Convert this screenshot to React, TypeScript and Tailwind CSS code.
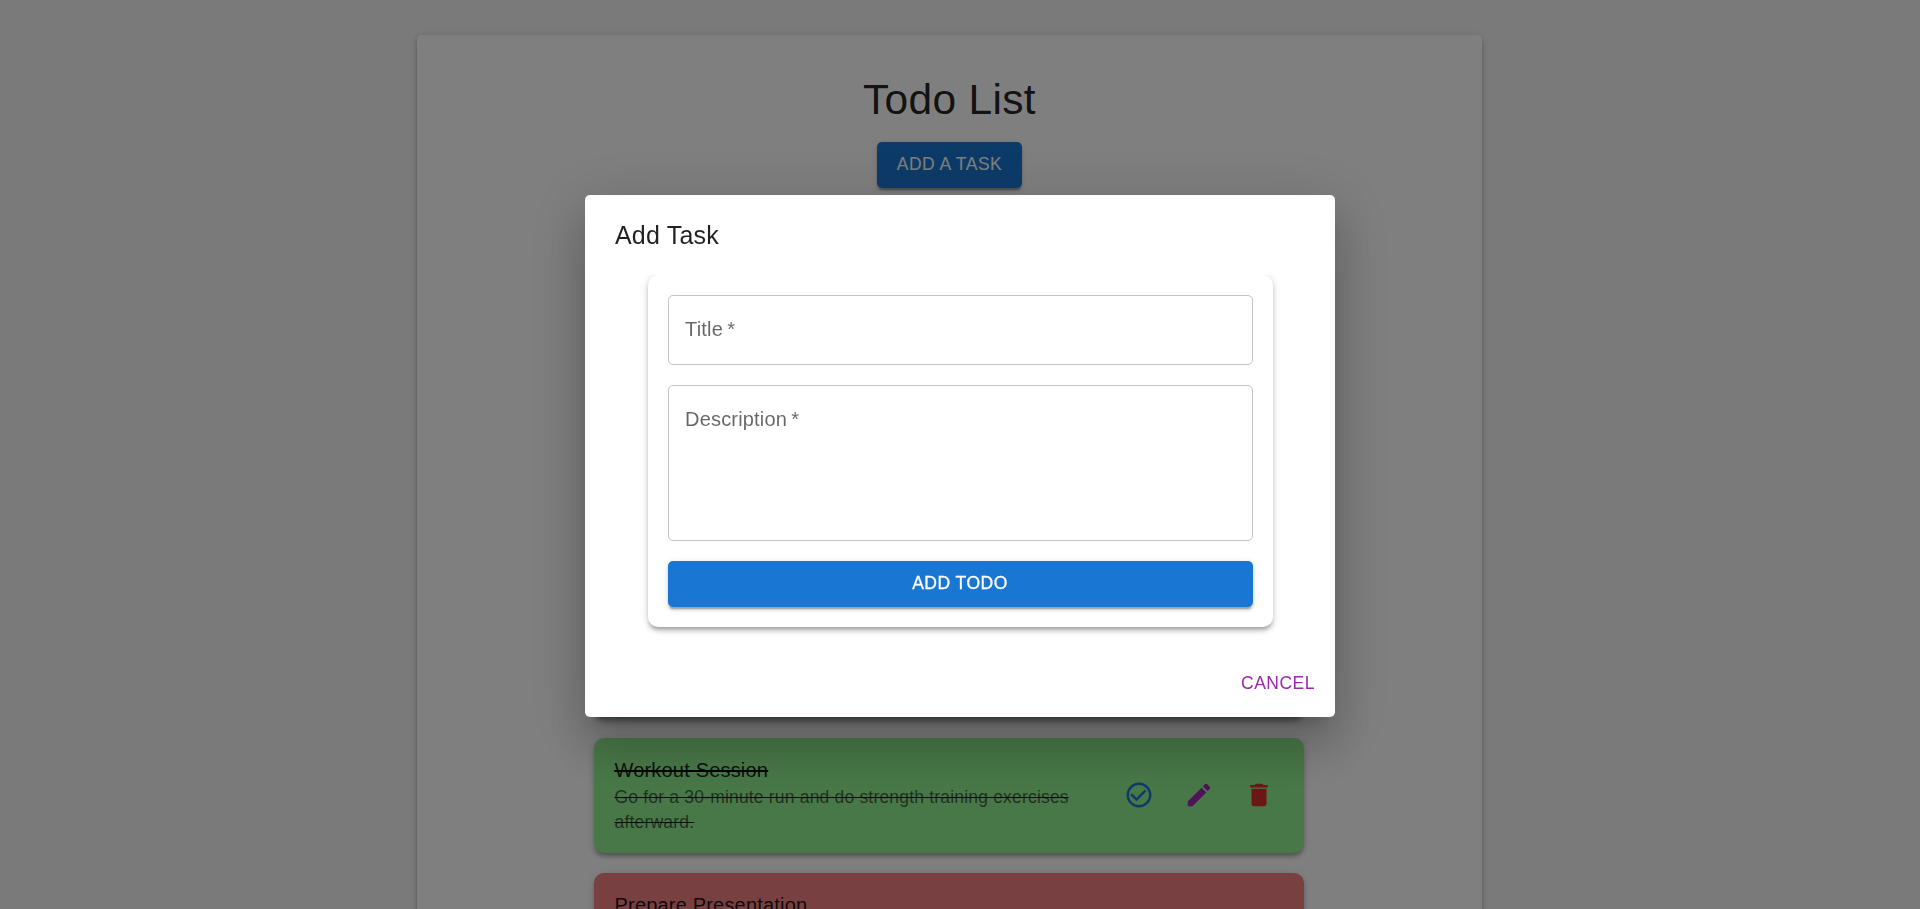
import type { ReactNode } from 'react';
import { MdDelete, MdEdit } from 'react-icons/md';

const buttonText = 'text-[17.5px] leading-[30.6px] tracking-[0.5px] uppercase';
const containedButton =
  'bg-[#1976d2] text-white rounded-[5px] px-5 pt-[7px] pb-[8px] shadow-[0px_3.75px_1.25px_-2.5px_rgba(0,0,0,0.2),0px_2.5px_2.5px_0px_rgba(0,0,0,0.14),0px_1.25px_6.25px_0px_rgba(0,0,0,0.12)]';
const cardShadow =
  'shadow-[0px_3.75px_3.75px_-2.5px_rgba(0,0,0,0.2),0px_3.75px_5px_0px_rgba(0,0,0,0.14),0px_1.25px_10px_0px_rgba(0,0,0,0.12)]';

function CheckCircleOutline() {
  return (
    <svg viewBox="0 0 24 24" className="size-[30px] fill-current">
      <path d="M16.59 7.58 10 14.17l-3.59-3.58L5 12l5 5 8-8zM12 2C6.48 2 2 6.48 2 12s4.48 10 10 10 10-4.48 10-10S17.52 2 12 2m0 18c-4.42 0-8-3.58-8-8s3.58-8 8-8 8 3.58 8 8-3.58 8-8 8" />
    </svg>
  );
}

function TaskItem({ done, title, children }: { done?: boolean; title?: string; children?: ReactNode }) {
  return (
    <li
      className={`flex h-[115px] shrink-0 items-center rounded-[10px] px-5 py-2.5 ${cardShadow} ${done ? 'bg-[#90ee90]' : 'bg-[#f08080]'}`}
    >
      <div className={`my-[7.5px] w-[500px] self-start pl-[0.5px] text-black/87 ${done ? 'line-through' : ''}`}>
        <p className={`text-[20px] leading-[30px] tracking-[0.1876px] ${done ? 'line-through' : ''}`}>{title}</p>
        <p className="text-[17.5px] leading-[25px] tracking-[0.1876px] text-black/60">{children}</p>
      </div>
      {title && (
        <div className="flex gap-2.5">
          <button className="p-2.5 text-[#1976d2]" aria-label="Complete">
            <CheckCircleOutline />
          </button>
          <button className="p-2.5 text-[#9c27b0]" aria-label="Edit">
            <MdEdit size={30} />
          </button>
          <button className="p-2.5 text-[#d32f2f]" aria-label="Delete">
            <MdDelete size={30} />
          </button>
        </div>
      )}
    </li>
  );
}

function TodoPage() {
  return (
    <main className="flex h-[909px] justify-center overflow-hidden bg-[#f5f5f5] pt-[35px] pr-[21px]">
      <section
        className={`flex h-[1200px] w-[1065px] flex-col items-center rounded-[5px] bg-white pt-[39px] ${cardShadow}`}
      >
        <h1 className="text-[42.5px] leading-[52.5px] tracking-[0.3124px] text-black/87">Todo List</h1>
        <button className={`mt-[15.5px] ${containedButton} ${buttonText}`}>Add a task</button>
        <ul className="mr-px mt-[415.4px] flex w-[710px] flex-col gap-5">
          <TaskItem />
          <TaskItem done title="Workout Session">
            Go for a 30-minute run and do strength training exercises afterward.
          </TaskItem>
          <TaskItem title="Prepare Presentation" />
        </ul>
      </section>
    </main>
  );
}

function Field({ label, className }: { label: string; className: string }) {
  return (
    <label
      className={`block rounded-[5px] border border-black/23 px-[16.5px] pt-[18px] text-[20px] leading-[30px] tracking-[0.1876px] text-black/60 ${className}`}
    >
      {label}
      {'\u2009*'}
    </label>
  );
}

function AddTaskDialog() {
  return (
    <div className="fixed inset-0 flex items-center justify-center bg-black/50 pt-[3px]">
      <div
        role="dialog"
        className="flex h-[522px] w-[750px] flex-col rounded-[5px] bg-white shadow-[0px_13.75px_18.75px_-8.75px_rgba(0,0,0,0.2),0px_30px_47.5px_3.75px_rgba(0,0,0,0.14),0px_11.25px_57.5px_10px_rgba(0,0,0,0.12)]"
      >
        <h2 className="px-[30px] py-5 text-[25px] leading-[40px] tracking-[0.1875px] text-black/87">Add Task</h2>
        <div className="overflow-hidden px-[30px] pb-[25px]">
          <form className={`mx-auto flex w-[625px] flex-col gap-5 rounded-[10px] bg-white p-5 ${cardShadow}`}>
            <Field label="Title" className="h-[70px]" />
            <Field label="Description" className="h-[156px]" />
            <button type="button" className={`${containedButton} ${buttonText} [-webkit-text-stroke:0.3px_white]`}>
              Add todo
            </button>
          </form>
        </div>
        <div className="flex justify-end p-2.5">
          <button className={`rounded-[5px] px-2.5 pt-[6.5px] pb-[8.5px] text-[#9c27b0] ${buttonText}`}>Cancel</button>
        </div>
      </div>
    </div>
  );
}

export default function App() {
  return (
    <div className="font-['Liberation_Sans',Arial,sans-serif]">
      <TodoPage />
      <AddTaskDialog />
    </div>
  );
}
